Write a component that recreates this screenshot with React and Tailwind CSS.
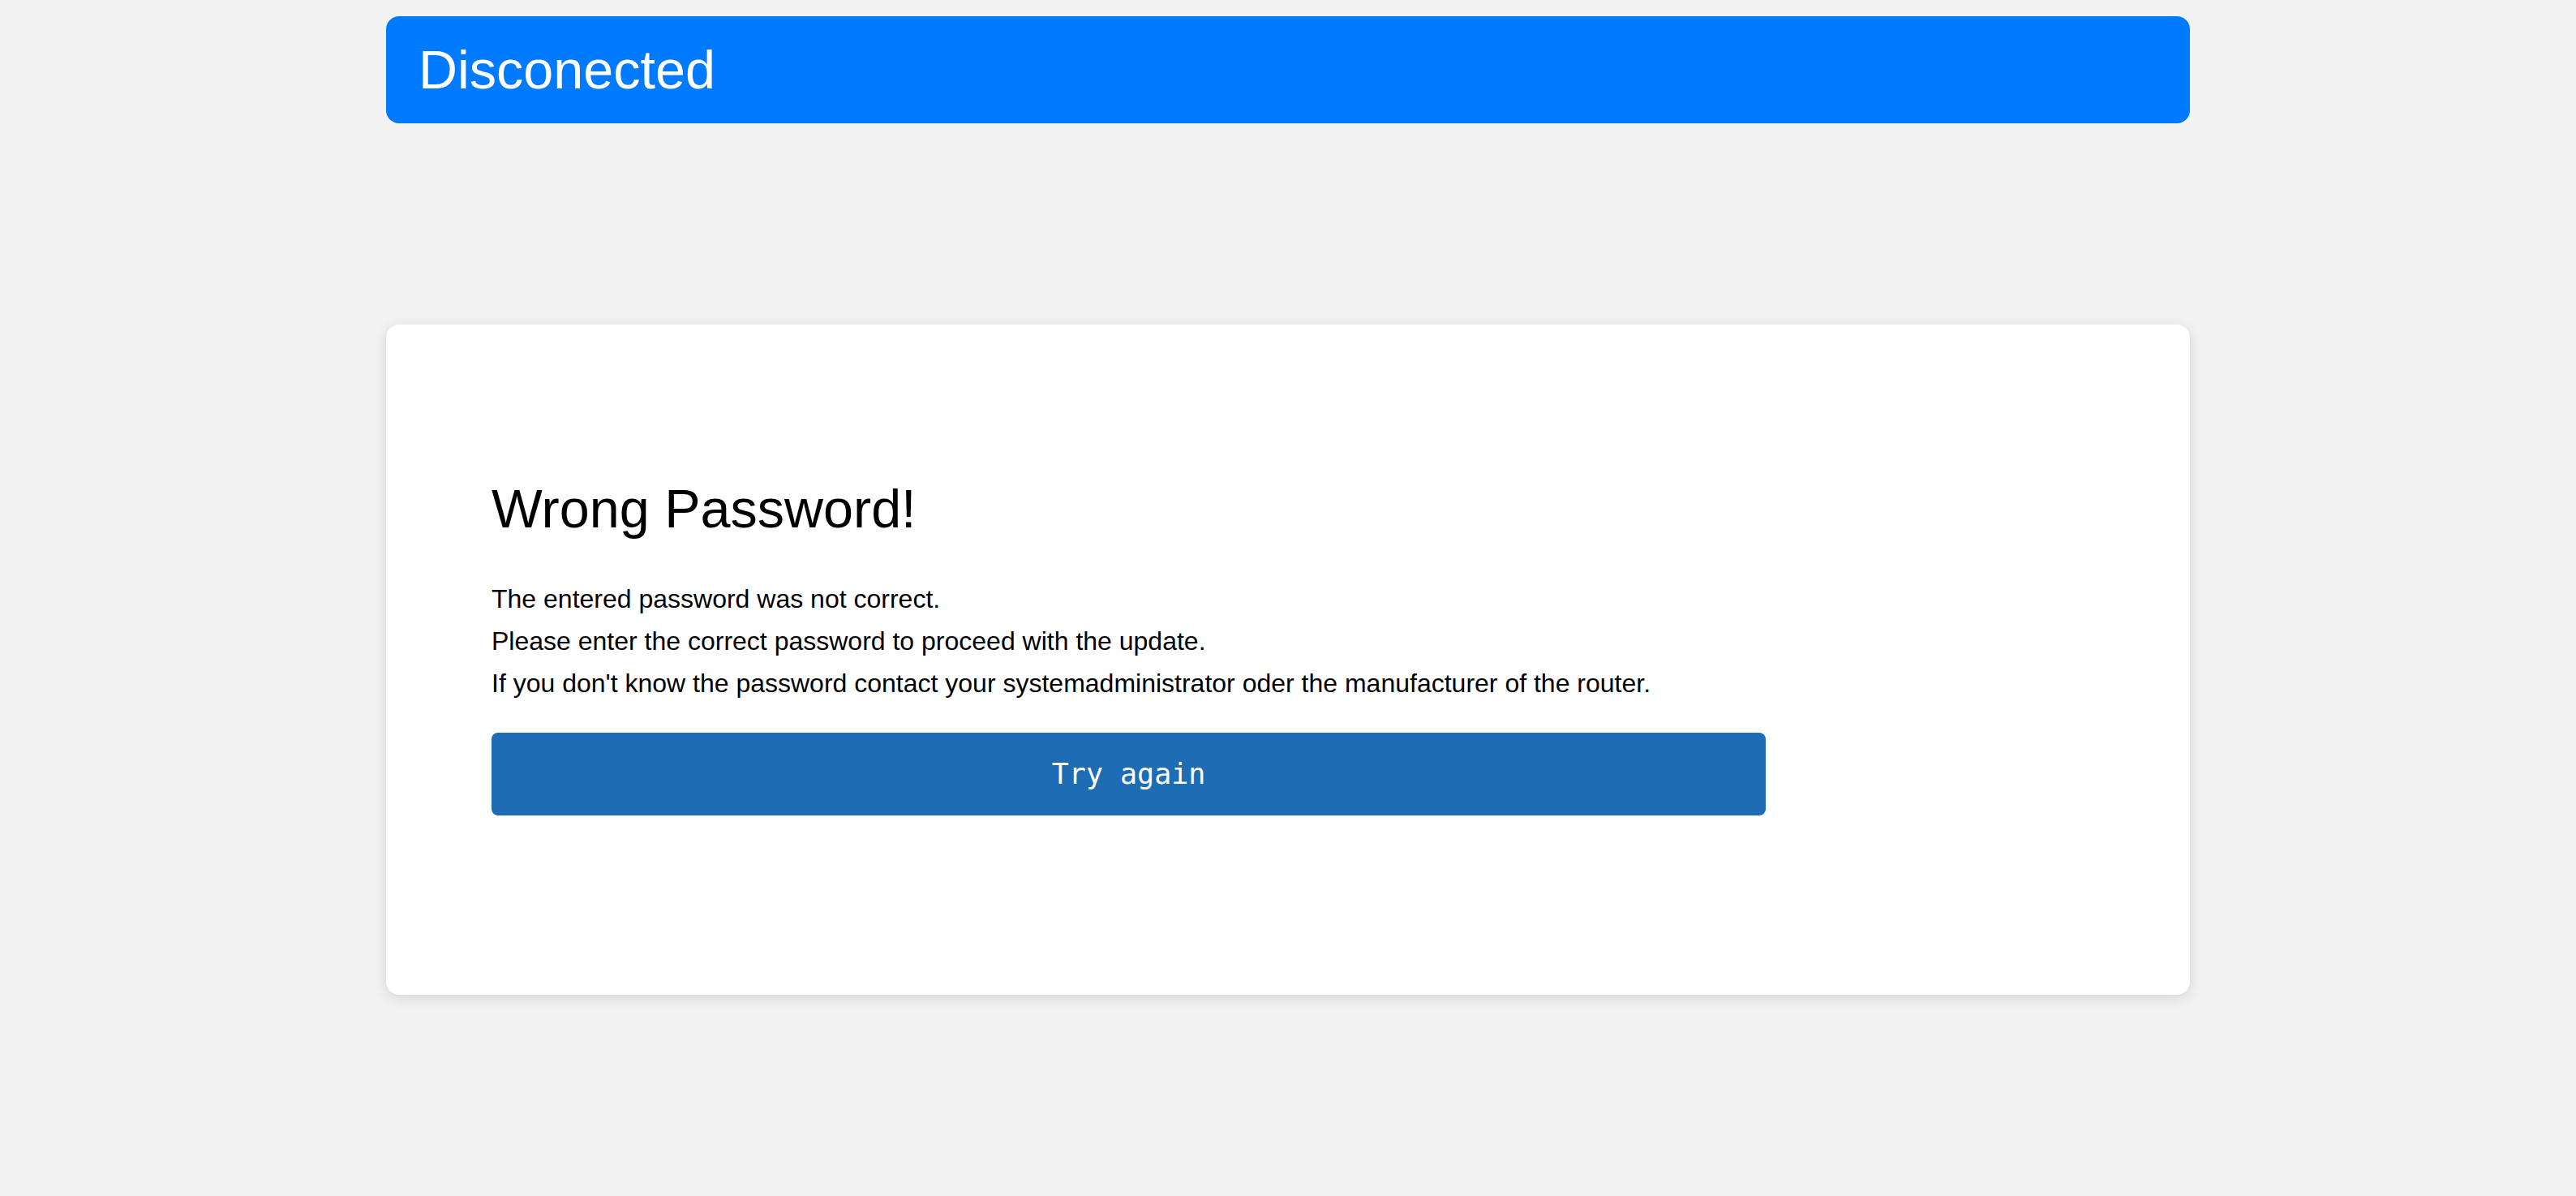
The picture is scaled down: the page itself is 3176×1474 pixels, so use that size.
export default function App() {
  return (
    <div className="min-h-screen bg-[#f2f2f2] pt-[20px] font-['Liberation_Sans',Arial,sans-serif] text-black">
      <div className="mx-auto w-[2224px]">
        <div className="flex h-[132px] items-center rounded-[16px] bg-[#007bff] px-[40px]">
          <h2 className="text-[66.5px] leading-[1.15] font-normal text-white">Disconected</h2>
        </div>

        <div className="mt-[248px] rounded-[16px] bg-white px-[130px] pt-[189px] pb-[221px] shadow-[0_4px_16px_rgba(0,0,0,0.12)]">
          <h1 className="text-[66.5px] leading-[1.15] font-normal">Wrong Password!</h1>
          <div className="mt-[47px] text-[32px] leading-[52px]">
            <p>The entered password was not correct.</p>
            <p>Please enter the correct password to proceed with the update.</p>
            <p>If you don't know the password contact your systemadministrator oder the manufacturer of the router.</p>
          </div>
          <button className="mt-[35px] flex h-[102px] w-[80%] items-center justify-center rounded-[8px] bg-[#1e6db4] font-['DejaVu_Sans_Mono',monospace] text-[35px] text-white">
            Try again
          </button>
        </div>
      </div>
    </div>
  );
}
